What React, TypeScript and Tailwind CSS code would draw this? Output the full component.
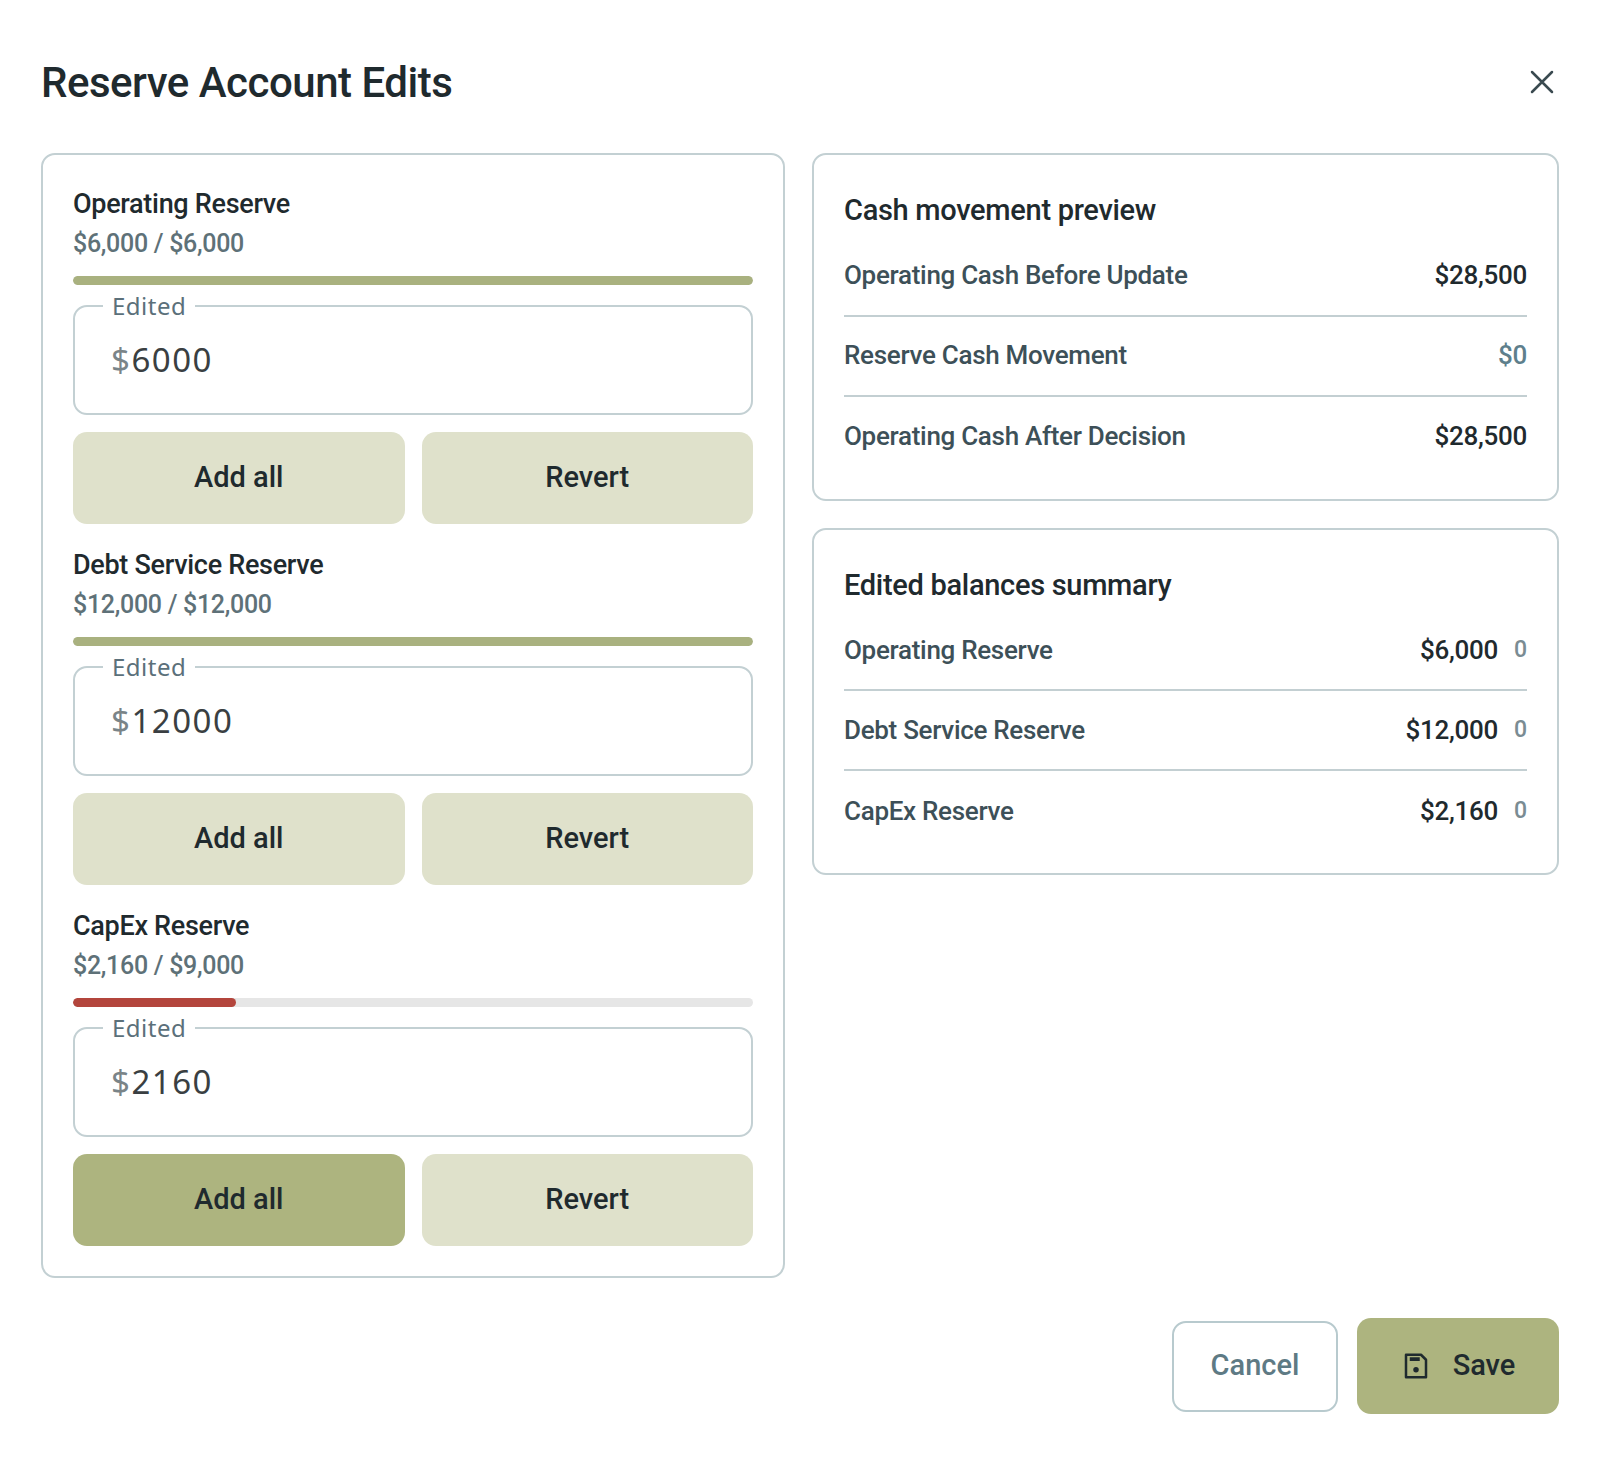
import React from "react";

const sections = [
  { name: "Operating Reserve", cur: "$6,000", tgt: "$6,000", pct: 100, val: "6000", active: false },
  { name: "Debt Service Reserve", cur: "$12,000", tgt: "$12,000", pct: 100, val: "12000", active: false },
  { name: "CapEx Reserve", cur: "$2,160", tgt: "$9,000", pct: 24, val: "2160", active: true },
];

function Row({ label, value, extra, last, blue }: { label: string; value: string; extra?: string; last?: boolean; blue?: boolean }) {
  return (
    <div className={`flex items-center h-[80px] ${last ? "" : "border-b-2 border-[#c3cfd2]"}`}>
      <span className="flex-1 text-[26px] font-medium text-[#3d5058] tracking-[-0.3px]">{label}</span>
      <span className={`text-[26px] font-medium tracking-[-0.3px] ${blue ? "text-[#5e7f8c]" : "text-[#1f2a2e]"}`}>{value}</span>
      {extra && <span className="ml-4 text-[23px] font-medium text-[#7a8c93]">{extra}</span>}
    </div>
  );
}

export default function App() {
  return (
    <div className="w-[1600px] h-[1457px] bg-white px-[41px] pt-[52px] text-[#1f2a2e]" style={{ fontFamily: "Roboto, 'Liberation Sans', sans-serif" }}>
      <div className="flex items-center justify-between h-[60px]">
        <h1 className="text-[42px] font-medium tracking-[-0.5px]">Reserve Account Edits</h1>
        <svg width="30" height="30" viewBox="0 0 24 24" className="mr-[2px]" fill="none" stroke="#3a4a50" strokeWidth="2" strokeLinecap="round">
          <path d="M4 4l16 16M20 4L4 20" />
        </svg>
      </div>
      <div className="flex gap-[27px] mt-[41px] items-start">
        <div className="w-[744px] border-2 border-[#c3d0d3] rounded-[14px] px-[30px] pt-[32px] pb-[30px] flex flex-col gap-[24px]">
          {sections.map((s) => (
            <div key={s.name}>
              <div className="text-[27px] font-medium leading-[34px] tracking-[-0.3px]">{s.name}</div>
              <div className="text-[25px] font-medium text-[#5e7178] leading-[30px] mt-[8px] tracking-[-0.3px]">{s.cur} / {s.tgt}</div>
              <div className="h-[9px] rounded-full bg-[#e6e6e6] mt-[17px] overflow-hidden">
                <div className={`h-full rounded-full ${s.pct < 100 ? "bg-[#b3453c]" : "bg-[#a9b17f]"}`} style={{ width: `${s.pct}%` }} />
              </div>
              <fieldset className="border-2 border-[#c3d0d3] rounded-[14px] h-[122px] mt-[8px] pl-[36px] pb-[8px] flex items-center">
                <legend className="px-[9px] ml-[-8px] text-[24px] text-[#5b707a] leading-[26px] tracking-[0.5px]" style={{ fontFamily: "'Noto Sans', sans-serif" }}>Edited</legend>
                <div className="text-[33px] text-[#3a3f42] tracking-[1.5px] mt-[-4px]" style={{ fontFamily: "'Noto Sans', sans-serif" }}><span className="text-[#7a8488]">$</span>{s.val}</div>
              </fieldset>
              <div className="grid grid-cols-2 gap-[17px] mt-[17px]">
                <button className={`h-[92px] rounded-[14px] text-[29px] font-medium ${s.active ? "bg-[#adb47f]" : "bg-[#dfe1cb]"}`}>Add all</button>
                <button className="h-[92px] rounded-[14px] text-[29px] font-medium bg-[#dfe1cb]">Revert</button>
              </div>
            </div>
          ))}
        </div>
        <div className="flex-1 flex flex-col gap-[27px]">
          <div className="border-2 border-[#c3d0d3] rounded-[14px] px-[30px] pt-[34px] pb-[22px]">
            <div className="text-[29px] font-medium mb-[4px] tracking-[-0.3px]">Cash movement preview</div>
            <Row label="Operating Cash Before Update" value="$28,500" />
            <Row label="Reserve Cash Movement" value="$0" blue />
            <Row label="Operating Cash After Decision" value="$28,500" last />
          </div>
          <div className="border-2 border-[#c3d0d3] rounded-[14px] px-[30px] pt-[34px] pb-[22px]">
            <div className="text-[29px] font-medium mb-[4px] tracking-[-0.3px]">Edited balances summary</div>
            <Row label="Operating Reserve" value="$6,000" extra="0" />
            <Row label="Debt Service Reserve" value="$12,000" extra="0" />
            <Row label="CapEx Reserve" value="$2,160" extra="0" last />
          </div>
        </div>
      </div>
      <div className="flex justify-end gap-[19px] mt-[40px] items-center">
        <button className="w-[166px] h-[91px] border-2 border-[#b8cace] rounded-[14px] text-[29px] font-medium text-[#5e7a84]">Cancel</button>
        <button className="w-[202px] h-[96px] rounded-[14px] bg-[#adb47f] flex items-center justify-center gap-[22px] text-[29px] font-medium">
          <svg width="30" height="30" viewBox="0 0 24 24" fill="none" stroke="#1f2a2e" strokeWidth="2">
            <path d="M4 3h12l4 4v14H4z" strokeLinejoin="round" />
            <rect x="7" y="5" width="8" height="3" fill="#1f2a2e" stroke="none" />
            <circle cx="12" cy="15" r="2.2" fill="#1f2a2e" stroke="none" />
          </svg>
          Save
        </button>
      </div>
    </div>
  );
}
